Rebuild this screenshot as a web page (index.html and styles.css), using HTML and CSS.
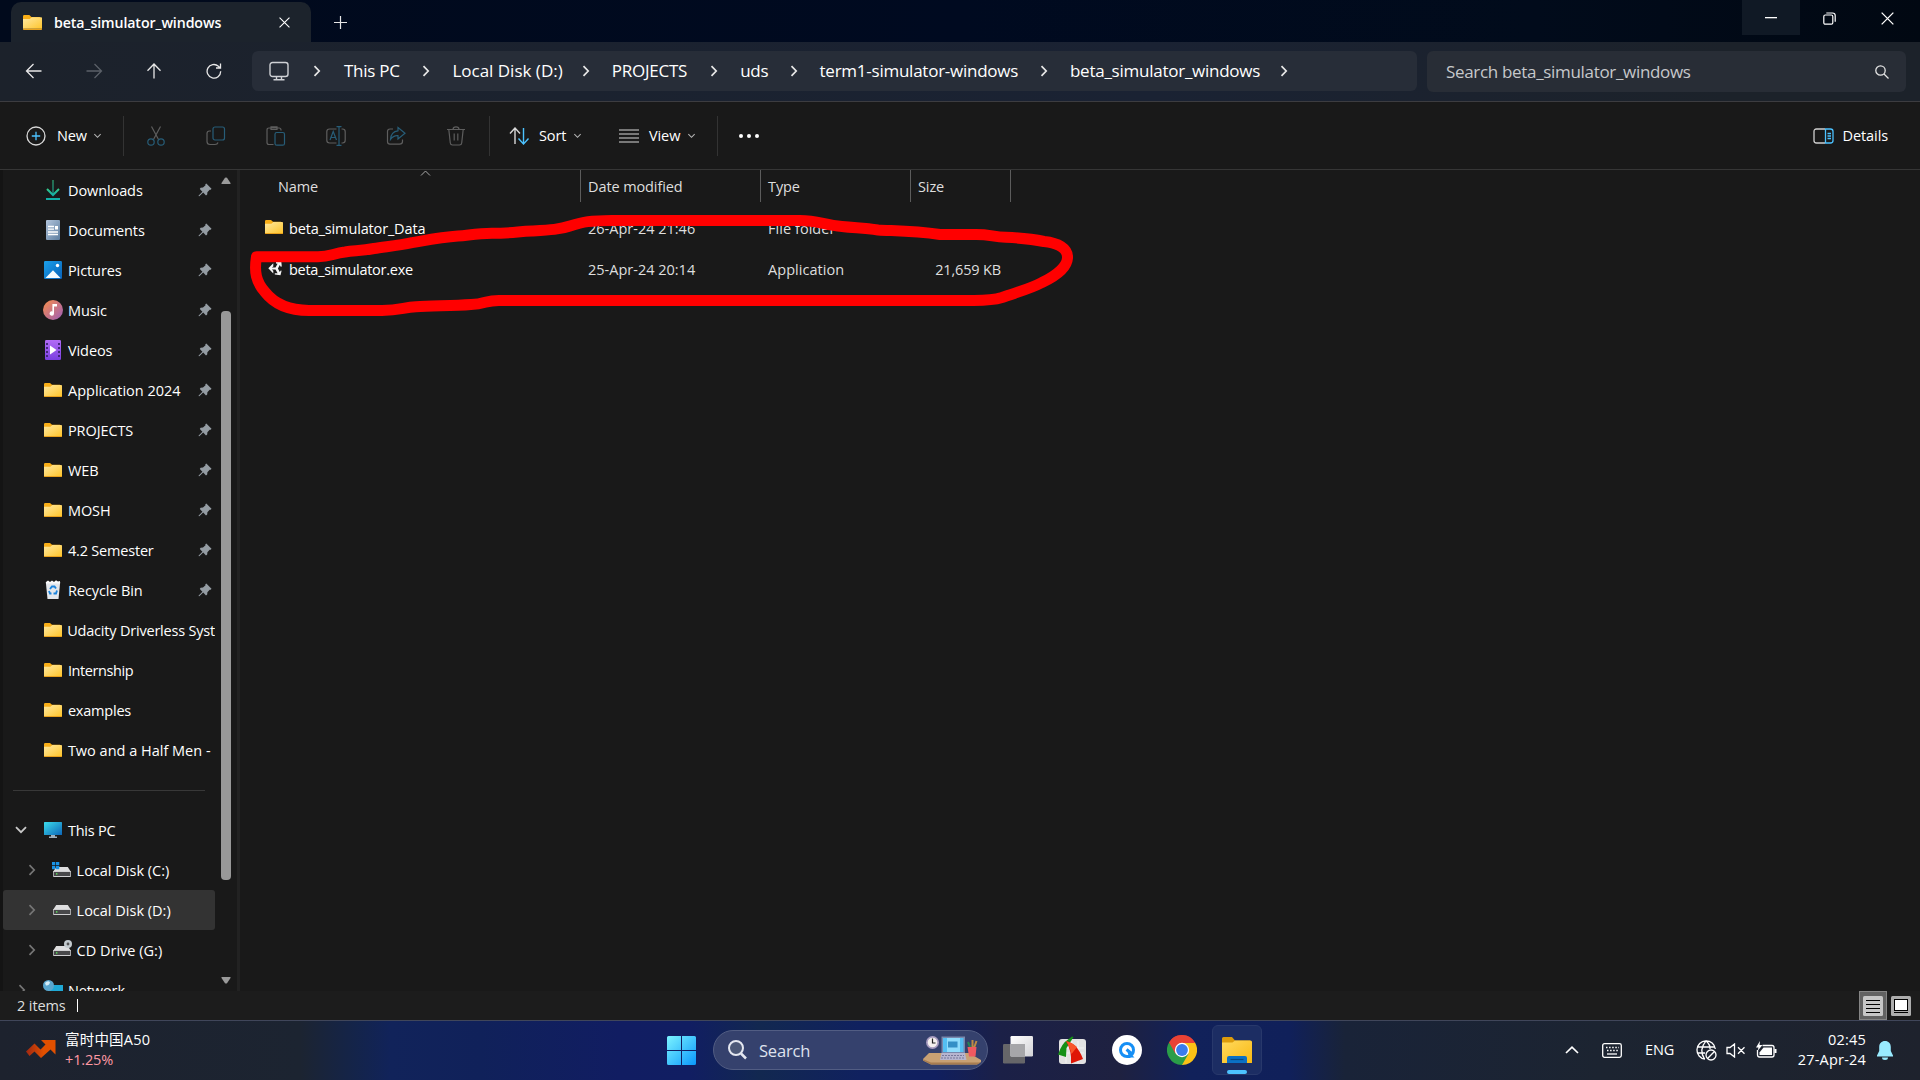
FILE: index.html
```html
<!DOCTYPE html>
<html lang="en">
<head>
<meta charset="utf-8">
<title>beta_simulator_windows</title>
<link rel="stylesheet" href="styles.css">
</head>
<body>
<svg class="sprite" width="0" height="0" aria-hidden="true">
  <defs>
    <linearGradient id="gFolder" x1="0" y1="0" x2="1" y2="1"><stop offset="0" stop-color="#ffe9a3"/><stop offset="1" stop-color="#fec52c"/></linearGradient>
    <linearGradient id="gDoc" x1="0" y1="0" x2="1" y2="1"><stop offset="0" stop-color="#b3c5dc"/><stop offset="1" stop-color="#5c7d9f"/></linearGradient>
    <linearGradient id="gPic" x1="0" y1="0" x2="1" y2="1"><stop offset="0" stop-color="#1ba0ea"/><stop offset="1" stop-color="#0861b8"/></linearGradient>
    <linearGradient id="gMusic" x1="0" y1="0" x2="1" y2="1"><stop offset="0.1" stop-color="#f08a55"/><stop offset="1" stop-color="#9c5cb8"/></linearGradient>
    <linearGradient id="gVideo" x1="0" y1="0" x2="0" y2="1"><stop offset="0" stop-color="#b26cf5"/><stop offset="1" stop-color="#7a3fe0"/></linearGradient>
    <linearGradient id="gDown" x1="0" y1="0" x2="0" y2="1"><stop offset="0" stop-color="#35c98a"/><stop offset="1" stop-color="#12aea6"/></linearGradient>
    <linearGradient id="gPc" x1="0" y1="0" x2="1" y2="1"><stop offset="0" stop-color="#3bdcec"/><stop offset="1" stop-color="#0d66b8"/></linearGradient>
    <linearGradient id="gWin" x1="0" y1="0" x2="1" y2="1"><stop offset="0" stop-color="#7cf3ff"/><stop offset="1" stop-color="#0a98fb"/></linearGradient>
    <linearGradient id="gRise" x1="0" y1="0" x2="1" y2="0"><stop offset="0" stop-color="#a02812"/><stop offset="0.6" stop-color="#e25000"/></linearGradient>
    <linearGradient id="gBigFolder" x1="0" y1="0" x2="1" y2="1"><stop offset="0" stop-color="#ffd95e"/><stop offset="1" stop-color="#f9b912"/></linearGradient>
    <linearGradient id="gWhite" x1="0" y1="0" x2="1" y2="1"><stop offset="0" stop-color="#ffffff"/><stop offset="1" stop-color="#d2d2d6"/></linearGradient>
    <symbol id="folder" viewBox="0 0 18 14"><path d="M0 1.2Q0 0 1.2 0H6L8 1.8H16V5H0Z" fill="#f9ae17"/><path d="M0 3.8H6.4L8.4 2H17.2Q18 2 18 2.8V13H0Z" fill="url(#gFolder)"/><path d="M0 13H18V13.4Q18 14 17.4 14H.6Q0 14 0 13.4Z" fill="#e9a11c"/></symbol>
    <symbol id="pin" viewBox="0 0 14 14"><path d="M8.3 .5 13.5 5.7 12.7 6.8 11.7 6.7 9.4 9.2 9.2 11.5 8 12.4 5.2 9.5 1.3 13.3 .5 13 .7 12.4 4.4 8.7 1.8 6 2.6 4.8 5 4.6 7.5 2.3 7.3 1.2Z" fill="#949ca3"/></symbol>
    <symbol id="drive" viewBox="0 0 18 10"><path d="M3.2 0H14.8L18 5H0Z" fill="#dededf"/><rect y="4" width="18" height="6" rx="1" fill="#cfcfd1"/><rect x=".7" y="5" width="16.6" height="4" rx=".5" fill="#48484a"/><rect x="3" y="6.2" width="1.4" height="1.4" fill="#5ce65c"/></symbol>
    <symbol id="chevR" viewBox="0 0 8 12"><path d="M1.5 1.2 6.2 6 1.5 10.8" fill="none" stroke="currentColor" stroke-width="1.7"/></symbol>
    <symbol id="chevD" viewBox="0 0 10 6"><path d="M1.5 1 5 4.5 8.500 1" fill="none" stroke="currentColor" stroke-width="1.2"/></symbol>
    <symbol id="cross" viewBox="0 0 12 12"><path d="M.6.6 11.400 11.400M11.400.6.6 11.400" fill="none" stroke="currentColor" stroke-width="1.2"/></symbol>
  </defs>
</svg>

<div class="window">
  <header class="titlebar">
    <div class="tab">
      <svg class="tab-folder" width="19" height="15"><use href="#folder"/></svg>
      <span class="tab-title">beta_simulator_windows</span>
      <svg class="tab-close" width="11" height="11"><use href="#cross"/></svg>
    </div>
    <svg class="new-tab" width="13" height="13" viewBox="0 0 13 13"><path d="M6.500 0V13M0 6.500H13" stroke="#e6e6e6" stroke-width="1.200"/></svg>
    <div class="caption">
      <div class="cap-btn hover"><svg width="12" height="2"><rect width="12" height="1.300" fill="#fff"/></svg></div>
      <div class="cap-btn"><svg width="13" height="13" viewBox="0 0 13 13" fill="none" stroke="#fff" stroke-width="1.200"><rect x=".8" y="3" width="9" height="9.200" rx="1.500"/><path d="M3.300 1H9.500Q12.200 1 12.200 3.600V9.800"/></svg></div>
      <div class="cap-btn"><svg width="13" height="13"><use href="#cross"/></svg></div>
    </div>
  </header>

  <nav class="navbar">
    <div class="nav-icons">
      <svg width="18" height="16" viewBox="0 0 18 16" fill="none" stroke="#e8e8e8" stroke-width="1.300"><path d="M16.500 8H2M8.500 1 1.500 8 8.500 15"/></svg>
      <svg width="18" height="16" viewBox="0 0 18 16" fill="none" stroke="#5b6068" stroke-width="1.300"><path d="M1.500 8H16M9.500 1 16.500 8 9.500 15"/></svg>
      <svg width="18" height="16" viewBox="0 0 18 16" fill="none" stroke="#e8e8e8" stroke-width="1.300"><path d="M9 15.500V1.500M2.500 7.800 9 1 15.500 7.800"/></svg>
      <svg width="18" height="16" viewBox="0 0 18 16" fill="none" stroke="#e8e8e8" stroke-width="1.300"><path d="M15.700 8.300A6.800 6.800 0 1 1 13.400 3.200L15.300 5M15.500.5V5H11"/></svg>
    </div>
    <div class="address">
      <svg class="monitor" width="20" height="20" viewBox="0 0 20 20" fill="none" stroke="#cfd1d5" stroke-width="1.400"><rect x="1" y="1.500" width="18" height="14" rx="2.500"/><path d="M7.500 16V18.500M12.500 16V18.500M4.500 18.700H15.500"/></svg>
      <svg class="sep first" width="8" height="12"><use href="#chevR"/></svg>
      <span class="crumb" style="width:57px">This PC</span><svg class="sep" width="8" height="12"><use href="#chevR"/></svg>
      <span class="crumb disk" style="width:108px">Local Disk (D:)</span><svg class="sep" width="8" height="12"><use href="#chevR"/></svg>
      <span class="crumb" style="width:77px">PROJECTS</span><svg class="sep" width="8" height="12"><use href="#chevR"/></svg>
      <span class="crumb" style="width:28px">uds</span><svg class="sep" width="8" height="12"><use href="#chevR"/></svg>
      <span class="crumb" style="width:199px">term1-simulator-windows</span><svg class="sep" width="8" height="12"><use href="#chevR"/></svg>
      <span class="crumb" style="width:189px">beta_simulator_windows</span><svg class="sep" width="8" height="12"><use href="#chevR"/></svg>
    </div>
    <div class="searchbox">
      <span>Search beta_simulator_windows</span>
      <svg width="14" height="14" viewBox="0 0 14 14" fill="none" stroke="#e4e4e4" stroke-width="1.300"><circle cx="5.500" cy="5.500" r="4.700"/><path d="M9 9 13.500 13.500"/></svg>
    </div>
  </nav>

  <div class="commands">
    <svg class="c-new" width="20" height="20" viewBox="0 0 20 20" fill="none"><circle cx="10" cy="10" r="9" stroke="#d8d8d8" stroke-width="1.300"/><path d="M10 5.800V14.200M5.800 10H14.200" stroke="#4cc2ff" stroke-width="1.300"/></svg>
    <span class="cmd w-new">New</span><svg class="drop" width="9" height="6"><use href="#chevD"/></svg>
    <i class="divider d1"></i>
    <div class="disabled">
      <svg width="20" height="20" viewBox="0 0 20 20" fill="none" stroke-width="1.200"><path d="M5.500.5 12.500 13.500M14.500.5 7.500 13.500" stroke="#5e5e5e"/><g stroke="#275d78"><circle cx="5" cy="16" r="3.200"/><circle cx="15" cy="16" r="3.200"/></g></svg>
      <svg width="20" height="20" viewBox="0 0 20 20" fill="none" stroke-width="1.200"><path d="M5 5H3.500Q1 5 1 7.500V15.500Q1 18.500 4 18.500H9Q11.500 18.500 12 16.500" stroke="#5e5e5e"/><rect x="7" y="1" width="11.500" height="13" rx="2" stroke="#275d78"/></svg>
      <svg width="20" height="20" viewBox="0 0 20 20" fill="none" stroke-width="1.200"><path d="M7.500 18.500H3Q1 18.500 1 16.500V4Q1 2 3 2H13Q15 2 15 4V4.500M5 .8H11V3.500H5Z" stroke="#5e5e5e"/><rect x="9" y="6.500" width="9.500" height="12.700" rx="1.800" stroke="#275d78"/></svg>
      <svg width="20" height="20" viewBox="0 0 20 20" fill="none" stroke-width="1.200"><path d="M10.500 3H3.500Q.8 3 .8 5.700V14.300Q.8 17 3.500 17H10.500M15.500 3H16.500Q19.200 3 19.200 5.700V14.300Q19.200 17 16.500 17H15.500" stroke="#5e5e5e"/><path d="M4 14 7.200 5.500 10.500 14M5 11.500H9.500M13 1V19M10.500.7H15.500M10.500 19.300H15.500" stroke="#275d78"/></svg>
      <svg width="20" height="20" viewBox="0 0 20 20" fill="none" stroke-width="1.200"><path d="M7 3H4Q1.500 3 1.500 5.500V15.500Q1.500 18.200 4 18.200H13.500Q16.500 18.200 16.500 15.500V13.500" stroke="#5e5e5e"/><path d="M12 1.500 19 7.200 12 13V9.700Q7.500 9.200 4.500 13.500 5 5.500 12 4.800Z" stroke="#275d78"/></svg>
      <svg width="20" height="20" viewBox="0 0 20 20" fill="none" stroke="#5e5e5e" stroke-width="1.200"><path d="M1 3.500H19M7 3.500Q7 .8 10 .8T13 3.500M2.800 3.500 4.300 17Q4.500 19 6.500 19H13.500Q15.500 19 15.700 17L17.200 3.500M8.200 7.500V14.500M11.800 7.500V14.500"/></svg>
    </div>
    <i class="divider d2"></i>
    <svg class="c-sort" width="21" height="18" viewBox="0 0 21 18" fill="none" stroke-width="1.400"><path d="M6 17V1.500M1 6.500 6 1 11 6.500" stroke="#d8d8d8"/><path d="M14.500 1V16.500M9.500 11.500 14.500 17 19.500 11.500" stroke="#4cc2ff"/></svg>
    <span class="cmd w-sort">Sort</span><svg class="drop" width="9" height="6"><use href="#chevD"/></svg>
    <svg class="c-view" width="20" height="14" viewBox="0 0 20 14" stroke="#d8d8d8" stroke-width="1.200"><path d="M0 1H20M0 5H20M0 9H20M0 13H20"/></svg>
    <span class="cmd w-view">View</span><svg class="drop" width="9" height="6"><use href="#chevD"/></svg>
    <i class="divider d3"></i>
    <svg class="c-more" width="22" height="6" fill="#fff"><circle cx="3" cy="3" r="2"/><circle cx="11" cy="3" r="2"/><circle cx="19" cy="3" r="2"/></svg>
    <div class="details">
      <svg width="21" height="16" viewBox="0 0 21 16" fill="none" stroke-width="1.300"><path d="M12 1H3.500Q1 1 1 3.500V12.500Q1 15 3.500 15H12" stroke="#d0d0d0"/><path d="M12.500 1H17.500Q20 1 20 3.500V12.500Q20 15 17.500 15H12.500ZM14.500 5.500H18M14.500 8H18M14.500 10.500H18" stroke="#4cc2ff"/></svg>
      <span class="cmd">Details</span>
    </div>
  </div>

  <main class="body">
    <aside class="side">
      <div class="tree">
        <div class="row"><span class="ico"><svg width="16" height="20" viewBox="0 0 16 20" fill="none" stroke="url(#gDown)" stroke-width="2"><path d="M7.500 0H8.500V15H7.500Z" fill="url(#gDown)" stroke="none"/><path d="M2 9 8 15 14 9"/><path d="M1 18H15V20H1Z" fill="#12aea6" stroke="none"/></svg></span><b>Downloads</b><svg class="pin" width="14" height="14"><use href="#pin"/></svg></div>
        <div class="row"><span class="ico"><svg width="14" height="20" viewBox="0 0 14 20"><rect width="14" height="20" rx="1" fill="url(#gDoc)"/><path d="M2 6.500H8M2 9.200H8M2 12H12M2 14.500H12" stroke="#fff" stroke-width="1.300"/><rect x="9" y="6" width="3" height="3.500" fill="#fff"/></svg></span><b>Documents</b><svg class="pin" width="14" height="14"><use href="#pin"/></svg></div>
        <div class="row"><span class="ico"><svg width="18" height="18" viewBox="0 0 18 18"><rect width="18" height="18" rx="1.200" fill="url(#gPic)"/><path d="M1.500 17 9 9.300 16.500 17Z" fill="#f4fbff"/><circle cx="13.500" cy="4.500" r="1.700" fill="#fff"/></svg></span><b>Pictures</b><svg class="pin" width="14" height="14"><use href="#pin"/></svg></div>
        <div class="row"><span class="ico"><svg width="20" height="20" viewBox="0 0 20 20"><circle cx="10" cy="10" r="10" fill="url(#gMusic)"/><path d="M9.400 4H14V6.500H11V13.500A2.200 2.200 0 1 1 9.400 11.400Z" fill="#fff"/></svg></span><b>Music</b><svg class="pin" width="14" height="14"><use href="#pin"/></svg></div>
        <div class="row"><span class="ico"><svg width="16" height="20" viewBox="0 0 16 20"><rect width="16" height="20" rx="1.200" fill="url(#gVideo)"/><path d="M5 5.500 11.500 10 5 14.500Z" fill="#fff"/><path d="M2 3V18M14 3V18" stroke="#3c2371" stroke-width="1.800" stroke-dasharray="2 2"/></svg></span><b>Videos</b><svg class="pin" width="14" height="14"><use href="#pin"/></svg></div>
        <div class="row"><span class="ico"><svg width="18" height="14"><use href="#folder"/></svg></span><b class="wide">Application 2024</b><svg class="pin" width="14" height="14"><use href="#pin"/></svg></div>
        <div class="row"><span class="ico"><svg width="18" height="14"><use href="#folder"/></svg></span><b>PROJECTS</b><svg class="pin" width="14" height="14"><use href="#pin"/></svg></div>
        <div class="row"><span class="ico"><svg width="18" height="14"><use href="#folder"/></svg></span><b>WEB</b><svg class="pin" width="14" height="14"><use href="#pin"/></svg></div>
        <div class="row"><span class="ico"><svg width="18" height="14"><use href="#folder"/></svg></span><b>MOSH</b><svg class="pin" width="14" height="14"><use href="#pin"/></svg></div>
        <div class="row"><span class="ico"><svg width="18" height="14"><use href="#folder"/></svg></span><b class="tight">4.2 Semester</b><svg class="pin" width="14" height="14"><use href="#pin"/></svg></div>
        <div class="row"><span class="ico"><svg width="16" height="20" viewBox="0 0 16 20"><path d="M.8 2H15.200L13.500 19H2.500Z" fill="#e3e7ec"/><path d="M1 2 3 .5 5 2 7 .5 9 2 11 .3 13 1.500 15 1V3.500H1Z" fill="#fafafa"/><path d="M5 9 7 6.500H9.500L11 8.500M12 10.500 11 13.500H8.500M6.500 13.500H5L4 11" stroke="#1c84dc" stroke-width="1.900" fill="none"/></svg></span><b>Recycle Bin</b><svg class="pin" width="14" height="14"><use href="#pin"/></svg></div>
        <div class="row"><span class="ico"><svg width="18" height="14"><use href="#folder"/></svg></span><b class="tight">Udacity Driverless Syst</b></div>
        <div class="row"><span class="ico"><svg width="18" height="14"><use href="#folder"/></svg></span><b class="tighter">Internship</b></div>
        <div class="row"><span class="ico"><svg width="18" height="14"><use href="#folder"/></svg></span><b class="tight">examples</b></div>
        <div class="row"><span class="ico"><svg width="18" height="14"><use href="#folder"/></svg></span><b class="wide">Two and a Half Men -</b></div>
        <div class="rule"></div>
        <div class="row"><svg class="open" width="12" height="8" viewBox="0 0 12 8"><path d="M1 1.200 6 6.200 11 1.200" fill="none" stroke="#c8c8c8" stroke-width="1.800"/></svg><span class="ico"><svg width="18" height="16" viewBox="0 0 18 16"><rect width="18" height="13" rx=".6" fill="url(#gPc)"/><path d="M7 13H11V14.500H13V16H5V14.500H7Z" fill="#9fb0bd"/></svg></span><b class="tight">This PC</b></div>
        <div class="row child"><svg class="fold" width="8" height="12"><use href="#chevR"/></svg><span class="ico"><svg width="20" height="18" viewBox="0 0 20 18"><use href="#drive" x="1" y="6" width="18" height="10"/><path d="M0 1H3.300V4.300H0ZM4 1H7.300V4.300H4ZM0 5H3.300V8.300H0ZM4 5H7.300V8.300H4Z" fill="#1a93e6"/></svg></span><b>Local Disk (C:)</b></div>
        <div class="row child selected"><svg class="fold" width="8" height="12"><use href="#chevR"/></svg><span class="ico"><svg width="18" height="10"><use href="#drive"/></svg></span><b>Local Disk (D:)</b></div>
        <div class="row child"><svg class="fold" width="8" height="12"><use href="#chevR"/></svg><span class="ico"><svg width="20" height="20" viewBox="0 0 20 20"><use href="#drive" x="1" y="6" width="18" height="10"/><circle cx="16" cy="4" r="4" fill="#c3cace"/><circle cx="16" cy="4" r="1.400" fill="#555"/></svg></span><b>CD Drive (G:)</b></div>
        <div class="row net"><svg class="fold" width="8" height="12"><use href="#chevR"/></svg><span class="ico"><svg width="20" height="20" viewBox="0 0 20 20"><rect x="5" y="5" width="15" height="12" fill="#1fa9d6"/><circle cx="5.500" cy="5.500" r="5.500" fill="#5aa7cf"/><path d="M2 3Q5 0 7 2.500 6 6 3 5.500Z" fill="#d5edf8"/></svg></span><b>Network</b></div>
      </div>
      <div class="scroll">
        <svg width="10" height="8"><path d="M4 .8Q5 0 6 .8L9.500 6V7H.5V6Z" fill="#9a9a9a"/></svg>
        <div class="thumb"></div>
        <svg width="10" height="8"><path d="M4 7.200Q5 8 6 7.200L9.500 2V1H.5V2Z" fill="#9a9a9a"/></svg>
      </div>
    </aside>

    <section class="files">
      <div class="head">
        <div class="name">Name<svg class="caret" width="11" height="6" viewBox="0 0 11 6"><path d="M1 5.500 5.500 1 10 5.500" fill="none" stroke="#a8a8a8"/></svg></div>
        <div>Date modified</div><div>Type</div><div>Size</div>
      </div>
      <div class="file"><span class="fico"><svg width="18" height="14"><use href="#folder"/></svg></span><span class="fname">beta_simulator_Data</span><span class="date">26-Apr-24 21:46</span><span class="type">File folder</span><span class="size"></span></div>
      <div class="file"><span class="fico unity"><svg width="14" height="15" viewBox="0 0 14 15"><path d="M.3 7.300 5.300 2.200V5.400L3.800 6.500H7.500L9.600 2.800 8 2.500V.9L13.300.6 13.800 5.500 12.700 5.800 11.800 4 9.900 7.500 11.800 11 12.800 9.400 13.600 9.800 12.500 14.300 6.800 13.600V12.200L9.600 12.300 7.500 8.500H3.800L5.300 9.800V12.500Z" fill="#f6f6f6"/></svg></span><span class="fname exe">beta_simulator.exe</span><span class="date">25-Apr-24 20:14</span><span class="type">Application</span><span class="size">21,659 KB</span></div>
      <svg class="marker" width="840" height="110" viewBox="245 210 840 110"><path d="M256.500 256.700H318C330 256.700 333 253.500 345 252C355 250.500 361 251 374 248.500C385 246.700 398 245.700 412 242.700C430 239.500 442 237 458 236C470 235 477 233.500 492 233.300C512 233.300 518 231.500 532 231C550 230 560 229.500 570 226C584 221.500 590 220.700 612 220.500H800C818 220.500 824 225 842 226.500C856 228 864 228 878 230C896 231 914 231 940 234.500H976C990 234.500 992 236.500 1006 237.300C1022 238 1030 238.500 1044 241.500C1058 243 1068 248 1067.500 258C1067 266 1058 275 1042 282.500C1030 289 1016 292.500 1002 297.500C994 300 986 300.400 974 300.400H499C485 300.400 486 304 471 304.500C452 306 432 305.500 416 306.700C403 307.500 400 310.400 382 310.400H309C284 310.400 272 301 265 292C256 282 254 272 256.500 256.700Z" fill="none" stroke="#f00" stroke-width="11" stroke-linejoin="round"/></svg>
    </section>
  </main>

  <footer class="status">
    <span>2 items</span><i></i>
    <div class="views">
      <div class="vbtn on"><svg width="20" height="20"><rect width="20" height="20" rx="1.500" fill="#c6c6c6"/><path d="M3 4.500H17M3 8.500H17M3 12.500H17M3 16.500H17" stroke="#000" stroke-width="1.200"/></svg></div>
      <div class="vbtn"><svg width="20" height="20"><rect width="20" height="20" rx="1.500" fill="#adadad"/><rect x="3.500" y="3.500" width="13" height="11" fill="#fff" stroke="#000"/><path d="M3 16.500H17" stroke="#000"/></svg></div>
    </div>
  </footer>
</div>

<div class="taskbar">
  <div class="widget">
    <svg width="30" height="19" viewBox="0 0 30 19"><path d="M0 12.500 8.500 4.500 14.500 10.500 19.500 5.500 15 1H29.500V15.500L24.500 10.500 15 19 8.500 12.500 3.500 17Z" fill="url(#gRise)"/></svg>
    <div><div class="index">富时中国A50</div><div class="gain">+1.25%</div></div>
  </div>
  <div class="apps">
    <svg class="start" width="29" height="29" viewBox="0 0 29 29" fill="url(#gWin)"><path d="M1.500 0H14V14H0V1.500Q0 0 1.500 0ZM15 0H27.500Q29 0 29 1.500V14H15ZM0 15H14V29H1.500Q0 29 0 27.500ZM15 15H29V27.500Q29 29 27.500 29H15Z"/></svg>
    <div class="pill">
      <svg width="19" height="20" viewBox="0 0 19 20" fill="none" stroke="#e4e7f0" stroke-width="2"><circle cx="8" cy="8" r="7" fill="#4c5878"/><path d="M13 13.500 18 18.500" stroke-width="2.500"/></svg>
      <span>Search</span>
      <svg class="desk" width="58" height="29" viewBox="0 0 58 29"><path d="M0 23 6 17H46L58 24V26L54 28.500H8L0 24.500Z" fill="#c9a173"/><path d="M0 23.300 8 26.500H58L54 28.500H8L0 24.500Z" fill="#a87d50"/><circle cx="9.500" cy="6.500" r="6.500" fill="#a89cc0"/><circle cx="9.500" cy="6.500" r="4.800" fill="#f5f0ef"/><path d="M9.500 2.500V7H12.500" fill="none" stroke="#222" stroke-width="1.200"/><path d="M18.500 .5H42V17H18.500Z" fill="#7988ac"/><path d="M20 2H40.500V16H20Z" fill="#54bff3"/><path d="M24 2H37V16H24Z" fill="#8fdcfc"/><path d="M25 5.500H34.500V11.500H25Z" fill="#348fc6"/><path d="M18.500 17H42L43.500 24H17Z" fill="#b7b5cf"/><path d="M19 19.500H41M18 22H42" stroke="#77789b" stroke-dasharray="2 1"/><path d="M49.500 4V12M53.500 5 51 12" stroke="#bd8b43" stroke-width="2"/><path d="M45 6 47.500 12" stroke="#268555" stroke-width="2"/><path d="M44.500 11H53.500L52.500 20.500H46Z" fill="#ef5960"/></svg>
    </div>
    <svg class="tv" width="30" height="28" viewBox="0 0 30 28"><rect y="8" width="22" height="19.500" rx="1.200" fill="#666669"/><rect x="7.500" width="22.500" height="20.500" rx="1.200" fill="url(#gWhite)"/><rect x="7.500" y="8" width="14.500" height="12.500" fill="#a6a6a9"/></svg>
    <svg class="fs" width="29" height="29" viewBox="0 0 29 29"><rect x="1" y="3" width="27" height="25" rx="3" fill="#e2e2e2"/><path d="M3 12H26M3 17H26M8 5V27M14 5V27M20 5V27" stroke="#f2f2f2"/><path d="M0 18.500Q4 7 10 3.500L14 .5 15.500 1 13 5 8.500 12 8 21Z" fill="#159016"/><path d="M8 5Q19 7 25 23L13 27.500Q14 15 8 5Z" fill="#df1606"/><path d="M8 5Q15 7 19 11L13.500 18Q11.500 10 8 5Z" fill="#f8552b"/></svg>
    <svg class="q" width="30" height="30" viewBox="0 0 30 30"><circle cx="15" cy="15" r="15" fill="#fff"/><path d="M18.500 21.500H15A6.500 6.500 0 1 1 21.500 15C21.500 17 21 18 20.200 19L14.500 14.500" fill="none" stroke="#168ff5" stroke-width="3"/><path d="M15 15 22.500 22.500H17Z" fill="#168ff5"/></svg>
    <svg class="chrome" width="30" height="30" viewBox="0 0 30 30"><path d="M15 15 2 7.500A15 15 0 0 1 28 7.500Z" fill="#e94235"/><path d="M15 15V30A15 15 0 0 0 28 7.500H15Z" fill="#fbc116"/><path d="M2 7.500A15 15 0 0 0 15 30L21.500 18.700 15 15Z" fill="#2a9d48"/><path d="M2 7.500 8.500 18.700 15 8H28A15 15 0 0 0 2 7.500Z" fill="#e94235"/><circle cx="15" cy="15" r="7.200" fill="#fff"/><circle cx="15" cy="15" r="5.900" fill="#3a7cec"/></svg>
    <div class="explorer">
      <svg width="30" height="27" viewBox="0 0 30 27"><path d="M0 1.500Q0 0 1.500 0H10L13 3.500H28V8H0Z" fill="#dc9b0b"/><path d="M0 5.500H10.500L13 3.500H28.500Q30 3.500 30 5V26H0Z" fill="url(#gBigFolder)"/><path d="M5 26V21Q5 19 7 19H23Q25 19 25 21V26Z" fill="#0b70c4"/><path d="M8.500 22.500H21.500" stroke="#074883" stroke-width="1.200"/></svg>
      <i></i>
    </div>
  </div>
  <div class="tray">
    <svg width="14" height="8" viewBox="0 0 14 8" fill="none" stroke="#fff" stroke-width="1.700"><path d="M1 7 7 1.200 13 7"/></svg>
    <svg class="kb" width="20" height="15" viewBox="0 0 20 15" fill="none" stroke="#fff" stroke-width="1.300"><rect x=".7" y=".7" width="18.600" height="13.600" rx="1.800"/><path d="M4 4.500H17M5 7.500H16" stroke-dasharray="1.500 1.600" stroke-width="1.500"/><path d="M5 11H15"/></svg>
    <span class="lang">ENG</span>
    <svg class="globe" width="21" height="21" viewBox="0 0 21 21" fill="none" stroke="#fff" stroke-width="1.300"><path d="M9 19.200A9.200 9.200 0 1 1 19.300 9M1.500 7H18.500M1.500 13H9M10 .8Q2.500 9.500 8.500 19M10 .8Q14.500 5 14 9"/><circle cx="15" cy="15" r="5"/><path d="M11.800 18.200 18.200 11.800"/></svg>
    <svg class="spk" width="20" height="15" viewBox="0 0 20 15" fill="none" stroke="#fff" stroke-width="1.300"><path d="M1 4.500H4L8.500 1V14L4 10.500H1ZM12 4.300 18.500 10.800M18.500 4.300 12 10.800"/></svg>
    <svg class="bat" width="21" height="17" viewBox="0 0 21 17"><path d="M6.500 4.500H16Q18 4.500 18 6.500V14Q18 16 16 16H3.500Q1.500 16 1.500 14V9" fill="none" stroke="#fff" stroke-width="1.300"/><path d="M7.500 6.500H16V14H3.500V11.500Z" fill="#fff"/><path d="M18.500 8H20.500V12H18.500ZM4 0 0 6.500H2.500L1.500 10 6.500 4H3.500Z" fill="#fff"/></svg>
    <div class="clock"><div>02:45</div><div>27-Apr-24</div></div>
    <svg class="bell" width="16" height="19" viewBox="0 0 16 19" fill="#99ebff"><path d="M8 0C4.500 0 2.200 2.500 2.200 6V10L0 14.500V15.500H16V14.500L13.800 10V6C13.800 2.500 11.500 0 8 0ZM5 16.500A3 2.500 0 0 0 11 16.500Z"/></svg>
  </div>
</div>
</body>
</html>
```
FILE: styles.css
```css
* { box-sizing: border-box; }
html, body { margin: 0; height: 100%; }
body {
  width: 1920px; height: 1080px; overflow: hidden;
  display: flex; flex-direction: column;
  background: #191919; color: #fff;
  font-family: "Open Sans", "Noto Sans", "Noto Sans CJK SC", sans-serif;
  font-size: 14.5px; line-height: 20px; letter-spacing: -0.1px;
  white-space: nowrap;
}
svg { display: block; flex: none; }
.sprite { position: absolute; }
.window { height: 1020px; display: flex; flex-direction: column; }

/* Title bar */
.titlebar { height: 42px; display: flex; background: linear-gradient(90deg, #010a1c, #000a20 50%, #010b1b 80%, #010812); }
.tab { margin: 2px 0 0 11px; width: 300px; height: 40px; padding: 1px 21px 0 12px; display: flex; align-items: center; background: #1c232c; border-radius: 10px 10px 0 0; }
.tab-title { margin-left: 12px; font-weight: 600; font-size: 14.2px; letter-spacing: -0.1px; }
.tab-close { margin-left: auto; }
.new-tab { margin: 16px 0 0 23px; }
.caption { margin: 0 4px 0 auto; display: flex; }
.cap-btn { width: 58px; height: 35px; display: flex; align-items: center; justify-content: center; padding-top: 1px; }
.cap-btn.hover { background: #101925; }

/* Navigation */
.navbar { height: 60px; padding: 9px 14px 0 25px; display: flex; background: linear-gradient(90deg, #1c222b, #1a2233 60%, #1c222a 90%); border-bottom: 1px solid #3c3c40; }
.nav-icons { height: 40px; width: 227px; display: flex; align-items: center; gap: 42px; }
.address { width: 1165px; height: 40px; padding-left: 17px; display: flex; align-items: center; background: #272d38; border-radius: 6px; font-size: 17px; }
.sep { color: #e8e8e8; }
.sep.first { margin: 0 1px 0 24px; }
.crumb { margin: 0 21.400px 0 22px; letter-spacing: -0.25px; }
.crumb.disk { letter-spacing: 0; }
.searchbox { margin-left: 10px; width: 479px; height: 41px; padding: 0 17px 0 19px; display: flex; align-items: center; justify-content: space-between; background: #282d36; border-radius: 6px; color: #c6c8cb; font-size: 17px; letter-spacing: -0.32px; }

/* Commands */
.commands { height: 68px; display: flex; align-items: center; border-bottom: 1px solid #363636; padding-left: 26px; }
.cmd { padding-top: 1px; }
.drop { color: #b5b5b5; }
.c-new { margin-right: 11px; }
.w-new { width: 36px; }
.w-sort { width: 34px; }
.w-view { width: 38px; }
.divider { width: 1px; height: 40px; background: #333; }
.d1 { margin: 0 22px 0 21px; }
.d2 { margin: 0 19px 0 23px; }
.disabled { display: flex; gap: 40px; }
.c-sort { margin-right: 9px; }
.c-view { margin: 0 10px 0 37px; }
.d3 { margin: 0 20px 0 21px; }
.details { margin: 0 32px 0 auto; display: flex; align-items: center; gap: 9px; }

/* Sidebar */
.body { height: 821px; display: flex; overflow: hidden; }
.side { width: 240px; display: flex; border-left: 3px solid #141414; border-right: 3px solid #222; }
.tree { width: 212px; height: 821px; overflow: hidden; }
.row { height: 40px; padding-left: 39px; display: flex; align-items: center; }
.row b { margin-left: 4px; padding-top: 1px; width: 148px; font-weight: 400; }
.row b:not(:last-child) { width: 128px; }
.row .wide { letter-spacing: 0; }
.row .tight { letter-spacing: -0.2px; }
.row .tighter { letter-spacing: -0.4px; }
.ico { width: 22px; display: flex; justify-content: center; }
.pin { margin-left: 2px; }
.rule { height: 1px; margin: 20px 10px 19px; background: #383838; }
.row .open { margin: 0 15px 0 -27px; }
.row.child { padding-left: 25px; }
.fold { color: #767676; }
.child .ico { margin-left: 16px; }
.child b { margin-left: 4px; letter-spacing: 0; }
.net { padding-left: 15px; }
.net .ico { margin-left: 16px; }
.selected { background: #333; border-radius: 3px; }
.scroll { width: 10px; margin-left: 6px; padding: 7px 0; display: flex; flex-direction: column; }
.thumb { height: 569px; margin: 126px 0 96px; background: #989898; border-radius: 4px; }

/* File list */
.files { flex: 1; position: relative; padding-left: 1px; }
.head { height: 32px; display: flex; color: #dedede; }
.head div { width: 150px; padding: 7px 0 0 7px; border-right: 1px solid #5c5c5c; }
.head .name { width: 340px; padding-left: 37px; position: relative; }
.head div:nth-child(2) { width: 180px; }
.head div:nth-child(4) { width: 100px; }
.caret { position: absolute; left: 179px; top: 0; }
.file { height: 41px; display: flex; align-items: center; }
.head + .file { margin-top: 6px; }
.fico { width: 48px; padding: 0 0 3px 24px; }
.unity { padding-left: 27px; }
.fname { width: 299px; letter-spacing: -0.15px; }
.exe { letter-spacing: -0.27px; }
.date { width: 180px; color: #dedede; letter-spacing: 0; }
.type { width: 143px; color: #dedede; letter-spacing: 0.05px; }
.size { width: 90px; text-align: right; color: #dedede; letter-spacing: -0.15px; }
.marker { position: absolute; left: 5px; top: 40px; }

/* Status bar */
.status { height: 29px; padding-left: 17px; display: flex; align-items: center; background: #1c1c1c; color: #dedede; }
.status > i { width: 1px; height: 13px; margin-left: 12px; background: #fff; }
.status > span { width: 48px; }
.views { margin: 0 5px 0 auto; display: flex; }
.vbtn { width: 28px; height: 29px; display: flex; align-items: center; justify-content: center; }
.vbtn.on { background: #626262; border: 1px solid #858585; }

/* Taskbar */
.taskbar {
  height: 60px; display: flex; border-top: 1px solid #40465a;
  background: linear-gradient(90deg, #1d222e 0, #1c2431 300px, #14244a 355px, #11235a 390px, #10215a 480px, #111d62 620px, #111e62 690px, #122850 760px, #10215f 860px, #101f5f 935px, #1b2047 1000px, #1e2140 1120px, #11215a 1190px, #10205a 1290px, #192338 1345px, #1c2431 1600px, #1e222d 1920px);
}
.widget { width: 667px; padding: 9px 0 0 26px; display: flex; gap: 9px; }
.widget > svg { margin-top: 9px; }
.gain { color: #ff99a4; }
.widget > div { letter-spacing: -0.15px; }
.index { letter-spacing: 0.2px; }
.apps { display: flex; align-items: center; height: 58px; }
.pill { margin: 0 15px 0 17px; width: 275px; height: 40px; padding: 0 6px 0 14px; display: flex; align-items: center; background: #35416d; border: 1px solid #525d83; border-radius: 20px; }
.pill span { margin-left: 12px; padding-top: 1px; font-size: 16.500px; letter-spacing: -0.2px; color: #dfe2ee; }
.desk { margin-left: auto; }
.fs { margin: 0 25px 0 25px; }
.chrome { margin: 0 15px 0 25px; }
.explorer { width: 50px; height: 50px; padding-top: 11px; display: flex; flex-direction: column; align-items: center; background: #1c2d63; border: 1px solid #28386b; border-radius: 6px; }
.explorer i { width: 20px; height: 4px; margin-top: 6px; flex: none; background: #4cc2ff; border-radius: 2px; }
.tray { margin-left: auto; padding-right: 27px; height: 58px; display: flex; align-items: center; }
.kb { margin: 0 23px 0 23px; }
.lang { width: 29px; }
.globe { margin: 0 9px 0 22px; }
.bat { margin: 0 10px 2px 10px; }
.clock { width: 79px; margin-right: 11px; text-align: right; letter-spacing: 0.2px; }
```
